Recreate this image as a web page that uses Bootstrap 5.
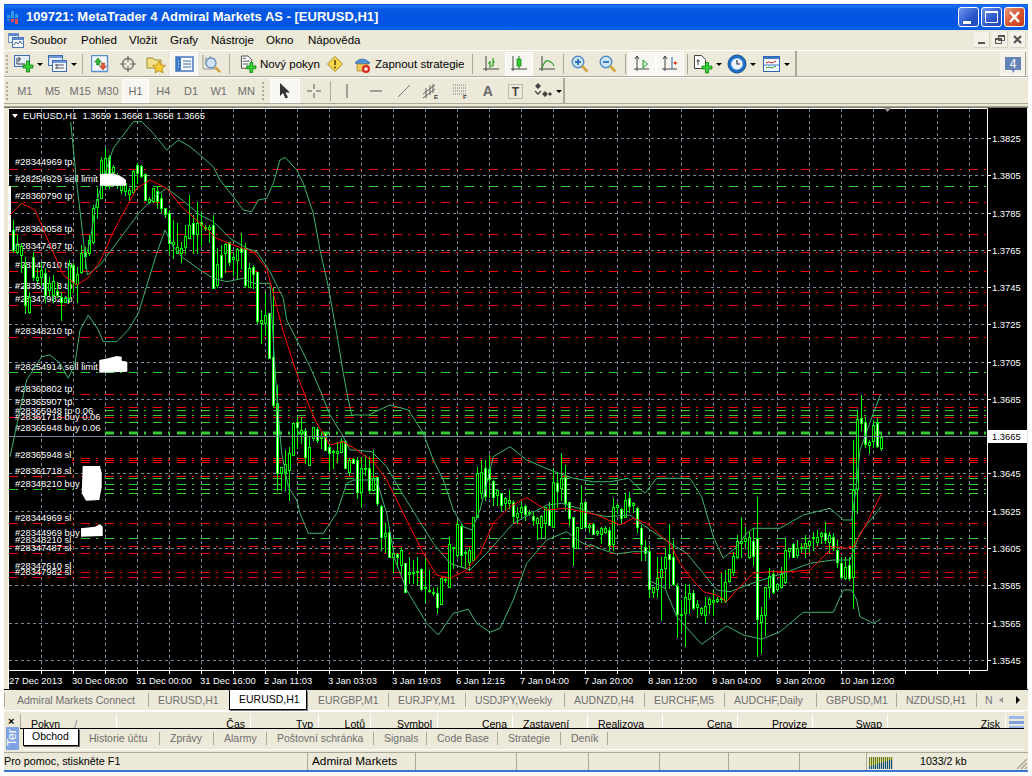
<!DOCTYPE html>
<html lang="cs">
<head>
<meta charset="UTF-8">
<title>109721: MetaTrader 4</title>
<link href="https://cdn.jsdelivr.net/npm/bootstrap@5.3.0/dist/css/bootstrap.min.css" rel="stylesheet">
<style>
body{background:#fff;padding:4px;font:11px/13px "Liberation Sans",Arial,sans-serif;color:#000}
.mt-window{width:1024px;height:768px;background:#ece9d8}
.title-row{height:26px;padding:0 3px 0 3px;color:#fff;font:bold 13px/26px "Liberation Sans",sans-serif;
 background:linear-gradient(#0a5be0 0,#1a72f0 8%,#0758e4 20%,#0054e3 80%,#0a62ec 95%,#0050d0 100%)}
.title-row svg{margin-right:3px}
.win-btn svg{margin:0}
.win-btn{width:21px;height:20px;margin-left:2px;border:1px solid #fff;border-radius:3px;background:linear-gradient(135deg,#6f96f0,#2a55c8 60%,#2248b8)}
.win-close{background:linear-gradient(135deg,#ec9a80,#d8512c 55%,#c03c18)}
.menu-row{height:20px;padding-left:4px}
.menu-row a{color:#000;text-decoration:none;font-size:11.5px}
.menu-items{display:grid;grid-template-columns:51px 48px 41px 41px 55px 42px 70px;margin-left:6px}
.child-btn{width:16px;height:16px;margin-right:2px;background:#f3f1e8;border-right:1px solid #d8d4c4;border-bottom:1px solid #d8d4c4}
.tool-row{height:27px;border-top:1px solid #fff;border-bottom:1px solid #aca899}
.tool-band{height:26px;border-right:2px solid #aca899}
.band-main{width:793px;display:grid;grid-template-columns:8px 33px 34px 7px 28px 28px 28px 28px 28px 6px 88px 29px 118px 10px 28px 28px 28px 5px 28px 28px 6px 28px 28px 6px 34px 34px 36px}
.band-tf{width:561px;display:grid;grid-template-columns:7px repeat(9,27.7px) 10px 30px 28px 4px 30px 28px 27px 28px 29px 27px 29px 35px;color:#6e6e6e}
.grip{width:2px;height:18px;margin-left:2px;align-self:center;border-left:2px dotted #aca899}
.tool-sep{width:1px;height:20px;justify-self:center;align-self:center;background:#aca899}
.tool-slot{height:24px;margin-top:1px}
.tool-on{background:#f7f6f0;outline:1px solid #fff;outline-offset:-1px}
.tool-drop::after{content:"";margin-left:3px;border-top:3px solid #000;border-left:3px solid transparent;border-right:3px solid transparent}
.tool-label{font-size:11.5px;margin-left:3px;white-space:nowrap}
.tf-on{height:24px;margin-top:1px;background:#f7f6f0;outline:1px solid #fff;outline-offset:-1px}
.tool-letter{font-size:14px;font-weight:bold;color:#666}
.chat-btn{width:26px;height:24px;margin:1px 2px 0 0;background:#f3f1e8;border-bottom:1px solid #fff;border-right:1px solid #aca899}
.chart-gap{height:4px;background:linear-gradient(#ece9d8 0,#ece9d8 40%,#8a887a 70%,#716f64 100%)}
.chart-holder{height:581px;padding-left:4px;background:#ece9d8}
.chart-holder svg{display:block;background:#000}
.chart-tabs{height:22px;border-top:1px solid #000;background:#ece9d8;border-bottom:1px solid #fff;color:#6e6e6e;font-size:10.500px;
 display:grid;grid-template-columns:4px 141px 80px 80px 80px 77px 99px 80px 80px 92px 80px 80px 48px;line-height:20px}
.chart-tabs>span{border-right:1px solid #aca899;margin:3px 0;line-height:14px;padding-left:9px;white-space:nowrap;overflow:hidden}
.chart-tabs>.tab-first{padding:0;border-left:1px solid #aca899;border-right:0}
.chart-tabs>.tab-on{background:#fff;color:#000;margin:0;height:20px;line-height:18px;border:1px solid #000;border-top:0;box-shadow:1px 1px 0 #777;padding-left:9px;width:78px}
.chart-tabs>.tab-plain{border:0}
.tab-arrows{border:0!important;padding:0!important;color:#000}
.term-box{height:41px}
.term-side{width:16px;padding-left:2px}
.term-close{font:bold 11px/10px "Liberation Sans",sans-serif;height:16px;padding:5px 0 0 2px}
.term-vert{width:13px;height:23px;background:#7fa2e4;color:#fff;writing-mode:vertical-rl;transform:rotate(180deg);text-align:right;font-size:12px;line-height:13px;overflow:hidden;padding-bottom:2px}
.term-main{width:1004px;border-top:1px solid #fff;padding-top:2px}
.head-row{height:14px;overflow:hidden;border-left:1px solid #aca899;line-height:21px;font-size:10.500px;
 display:grid;grid-template-columns:96px 134px 68px 52px 67px 75px 75px 75px 75px 75px 75px 118px 20px}
.head-row>span{border-right:1px solid #fff;padding:0 5px;text-align:right;white-space:nowrap;overflow:hidden}
.head-row>.head-left{text-align:left;padding-left:10px}
.head-sort{color:#888;margin-left:14px}
.head-icon{border:0!important;padding:2px 0 0 3px!important}
.term-tabs{height:22px;border-top:1px solid #000;color:#6e6e6e;border-bottom:1px solid #fff;font-size:10.500px;
 display:grid;grid-template-columns:3px 56px 81px 54px 53px 107px 53px 71px 63px 47px}
.term-tabs>span{border-right:1px solid #aca899;margin:3px 0;height:13px;padding-left:10px;white-space:nowrap;line-height:13px}
.term-tabs>.tab-first{padding:0;border:0}
.term-tabs>.term-on{background:#fff;color:#000;margin:0;height:17px;line-height:15px;border:1px solid #000;border-top:0;box-shadow:1px 1px 0 #666;padding-left:8px}
.status-row{height:18px;border-top:1px solid #aca899;font-size:11.800px;line-height:17px;
 display:grid;grid-template-columns:304px 108px 101px 72px 71px 69px 71px 67px 46px 1fr}
.status-row>span{border-right:1px solid #aca899;padding-left:4px;overflow:hidden;white-space:nowrap}
.status-row>.status-first{padding-left:0;font-size:10.800px}
.status-row>.status-last{border:0;padding-left:2px}
.status-row>.status-kb{border:0;padding-left:7px;font-size:10.600px}
.status-blue{height:2px;background:#3b74d2}
.chart-txt{font:9.400px "Liberation Sans",sans-serif;fill:#fff}
</style>
</head>
<body>
<div class="mt-window d-flex flex-column overflow-hidden">

  <div class="title-row d-flex align-items-center">
    <svg width="16" height="17" viewBox="0 0 16 17"><path d="M0 6h3v3H0zM4 2h3v7H4zM8 5h3v4H8z" fill="#2f9be8"/><path d="M4 10h3v3H4zM8 10h3v5H8z" fill="#d85050"/><path d="M0 10h3v2H0z" fill="#3a7fd0"/></svg>
    <span class="flex-grow-1">109721: MetaTrader 4 Admiral Markets AS - [EURUSD,H1]</span>
    <span class="win-btn d-flex align-items-end"><svg width="19" height="16" viewBox="0 0 19 16"><path d="M4 11h8v3H4z" fill="#fff"/></svg></span>
    <span class="win-btn"><svg class="d-block" width="19" height="18" viewBox="0 0 19 18"><path d="M3.500 3.500h12v11h-12z" fill="none" stroke="#fff"/><path d="M3 3h13v2H3z" fill="#fff"/></svg></span>
    <span class="win-btn win-close"><svg class="d-block" width="19" height="18" viewBox="0 0 19 18"><path d="M5 4l9 10M14 4L5 14" stroke="#fff" stroke-width="2.400"/></svg></span>
  </div>

  <div class="menu-row d-flex align-items-center">
    <svg width="16" height="15" viewBox="0 0 16 15"><rect x=".5" y=".5" width="10" height="9" fill="#eaf1fb" stroke="#6f8fc0"/><rect x="4.500" y="4.500" width="11" height="10" fill="#f7fafe" stroke="#4f78b8"/><path d="M1 1h9v2H1z" fill="#5b86c8"/><path d="M5 5h10v2H5z" fill="#5b86c8"/><path d="M6 12l2-3 2 2 2-3 2 3" fill="none" stroke="#3a5f98"/></svg>
    <div class="menu-items">
      <a href="#">Soubor</a><a href="#">Pohled</a><a href="#">Vložit</a><a href="#">Grafy</a><a href="#">Nástroje</a><a href="#">Okno</a><a href="#">Nápověda</a>
    </div>
    <span class="ms-auto child-btn"><svg class="d-block" width="16" height="16" viewBox="0 0 16 16"><path d="M4 10h7v2H4z" fill="#555"/></svg></span>
    <span class="child-btn"><svg class="d-block" width="16" height="16" viewBox="0 0 16 16"><path d="M6.500 3.500h6v5h-6zM3.500 6.500h6v5h-6z" fill="#f3f1e8" stroke="#555"/><path d="M6 3h7v2H6zM3 6h7v2H3z" fill="#555"/></svg></span>
    <span class="child-btn"><svg class="d-block" width="16" height="16" viewBox="0 0 16 16"><path d="M4 4l7 7M11 4l-7 7" stroke="#555" stroke-width="2.200"/></svg></span>
  </div>

  <div class="tool-row d-flex">
    <div class="tool-band band-main">
      <span class="grip"></span>
      <span class="tool-slot tool-drop d-flex align-items-center justify-content-center"><svg width="20" height="20" viewBox="0 0 20 20"><rect x=".5" y="1.500" width="15" height="11" fill="#e4eefa" stroke="#3f6fb0"/><path d="M3 4v6h8M5 3v5M5 5h2" fill="none" stroke="#333"/><path d="M10 9h3.500v-4h3v4H20v3h-3.500v4h-3v-4H10z" transform="translate(-1 2)" fill="#35d235" stroke="#0c7c0c" stroke-width=".8"/></svg></span>
      <span class="tool-slot tool-drop d-flex align-items-center justify-content-center"><svg width="20" height="20" viewBox="0 0 20 20"><rect x=".5" y="1.500" width="14" height="10" fill="#e4eefa" stroke="#3f6fb0"/><rect x="4.500" y="6.500" width="14" height="11" fill="#f4f8fe" stroke="#3f6fb0"/><path d="M1 2h13v2H1zM5 7h13v2H5z" fill="#6f9bd8"/><path d="M7 11h9M7 14h9M9 10v5" stroke="#556" fill="none"/></svg></span>
      <span class="tool-sep"></span>
      <span class="tool-slot d-flex align-items-center justify-content-center"><svg width="18" height="18" viewBox="0 0 18 18"><rect x=".5" y=".5" width="16" height="16" rx="1" fill="#f4f8fe" stroke="#5b8fd0" stroke-width="1.400"/><path d="M6 3l3.500 4H7.500v3h-3V7H2.500z" transform="translate(1 0)" fill="#2fb52f" stroke="#106a10" stroke-width=".5"/><path d="M12 15l-3.500-4h2V8h3v3h2z" fill="#e6562c" stroke="#8a2a10" stroke-width=".5"/></svg></span>
      <span class="tool-slot d-flex align-items-center justify-content-center"><svg width="18" height="18" viewBox="0 0 18 18"><circle cx="9" cy="9" r="5.500" fill="none" stroke="#777" stroke-width="1.400"/><path d="M9 1v6M9 11v6M1 9h6M11 9h6" stroke="#666" stroke-width="1.200"/></svg></span>
      <span class="tool-slot d-flex align-items-center justify-content-center"><svg width="20" height="20" viewBox="0 0 20 20"><path d="M1 4h6l2 2h6v8H1z" fill="#f2e08a" stroke="#a08a30"/><path d="M13 7l2 4 4.500.5-3.300 3 .9 4.500-4.100-2.300-4 2.300.9-4.500-3.300-3 4.500-.5z" fill="#f6c834" stroke="#a87f10" stroke-width=".7"/></svg></span>
      <span class="tool-slot tool-on d-flex align-items-center justify-content-center"><svg width="19" height="18" viewBox="0 0 19 18"><rect x="1" y="2" width="17" height="14" fill="#f8fbff" stroke="#2f66b0" stroke-width="1.300"/><path d="M1 2h5v14H1z" fill="#3d78c8"/><path d="M8 6h8M8 9h8M8 12h8" stroke="#3a6aa8"/><path d="M3 6h1M3 9h1M3 12h1" stroke="#fff"/></svg></span>
      <span class="tool-slot d-flex align-items-center justify-content-center"><svg width="20" height="20" viewBox="0 0 20 20"><path d="M1 1v14h14" fill="none" stroke="#999"/><path d="M4 3v8M8 2v7M12 4v5" stroke="#888"/><circle cx="9" cy="9" r="5" fill="#cfe2f6" stroke="#6a8fb8" stroke-width="1.300"/><path d="M13 13l5 5" stroke="#d0a030" stroke-width="2.400"/></svg></span>
      <span class="tool-sep"></span>
      <span class="tool-slot d-flex align-items-center ps-2"><svg width="18" height="20" viewBox="0 0 18 20"><path d="M1.500 1.500h7l4 4v9h-11z" fill="#fff" stroke="#444"/><path d="M3 7h7M3 10h6M3 4h3" stroke="#444"/><path d="M8 11h3.500V7.500h3V11H18v3h-3.500v4h-3v-4H8z" transform="translate(-1 1)" fill="#35d235" stroke="#0c7c0c" stroke-width=".8"/></svg><span class="tool-label">Nový pokyn</span></span>
      <span class="tool-slot d-flex align-items-center justify-content-center"><svg width="16" height="16" viewBox="0 0 16 16"><path d="M8 .5L15.500 8 8 15.500.5 8z" fill="#f8d848" stroke="#a88820"/><path d="M8 4v5M8 10.500v2" stroke="#70500a" stroke-width="1.800"/></svg></span>
      <span class="tool-slot d-flex align-items-center ps-1"><svg width="19" height="20" viewBox="0 0 19 20"><path d="M2 9q7-8 15 0-7 3-15 0z" fill="#4f95d8" stroke="#20609f" stroke-width=".7"/><path d="M4 10h11v7H4z" fill="#eec85c" stroke="#9f8328" stroke-width=".7"/><circle cx="13" cy="15" r="4" fill="#d82a1c"/><circle cx="13" cy="15" r="1.800" fill="#fff"/></svg><span class="tool-label">Zapnout strategie</span></span>
      <span class="tool-sep"></span>
      <span class="tool-slot d-flex align-items-center justify-content-center"><svg width="18" height="18" viewBox="0 0 18 18"><path d="M4 1v15M1 14h16" stroke="#444" fill="none"/><path d="M8 6v7M11 3v8" stroke="#1e9a1e" stroke-width="1.200"/><path d="M6 8h2M11 7h2M9 11h2" stroke="#1e9a1e"/></svg></span>
      <span class="tool-slot tool-on d-flex align-items-center justify-content-center"><svg width="18" height="18" viewBox="0 0 18 18"><path d="M3 1v15M1 14h16" stroke="#444" fill="none"/><path d="M9 1v13" stroke="#0c7c0c"/><rect x="7" y="4" width="4" height="7" fill="#2ed02e" stroke="#0c7c0c" stroke-width=".7"/></svg></span>
      <span class="tool-slot d-flex align-items-center justify-content-center"><svg width="18" height="18" viewBox="0 0 18 18"><path d="M4 1v15M1 14h16" stroke="#444" fill="none"/><path d="M4 13q3-9 7-7t5 5" fill="none" stroke="#2c9a2c" stroke-width="1.200"/></svg></span>
      <span class="tool-sep"></span>
      <span class="tool-slot d-flex align-items-center justify-content-center"><svg width="18" height="18" viewBox="0 0 18 18"><circle cx="7" cy="7" r="5.800" fill="#cfe6fa" stroke="#4f8bc4" stroke-width="1.400"/><path d="M4 7h6M7 4v6" stroke="#2a70b8" stroke-width="1.800"/><path d="M11 11l5.500 5.500" stroke="#d2a63a" stroke-width="2.600"/></svg></span>
      <span class="tool-slot d-flex align-items-center justify-content-center"><svg width="18" height="18" viewBox="0 0 18 18"><circle cx="7" cy="7" r="5.800" fill="#cfe6fa" stroke="#4f8bc4" stroke-width="1.400"/><path d="M4 7h6" stroke="#2a70b8" stroke-width="1.800"/><path d="M11 11l5.500 5.500" stroke="#d2a63a" stroke-width="2.600"/></svg></span>
      <span class="tool-sep"></span>
      <span class="tool-slot tool-on d-flex align-items-center justify-content-center"><svg width="18" height="18" viewBox="0 0 18 18"><path d="M4 1v15M1 14h15" stroke="#444" fill="none"/><path d="M2 4l2-3 2 3" fill="none" stroke="#444"/><path d="M10 5l4.500 4L10 13z" fill="#d8f4d8" stroke="#1e9a1e"/></svg></span>
      <span class="tool-slot tool-on d-flex align-items-center justify-content-center"><svg width="18" height="18" viewBox="0 0 18 18"><path d="M4 1v15M1 14h15" stroke="#444" fill="none"/><path d="M2 4l2-3 2 3" fill="none" stroke="#444"/><path d="M11 2v12" stroke="#2a6ab0"/><path d="M12 8l3-2v1.500h1.500v1H15V10z" fill="#d8401c"/></svg></span>
      <span class="tool-sep"></span>
      <span class="tool-slot tool-drop d-flex align-items-center justify-content-center"><svg width="20" height="20" viewBox="0 0 20 20"><path d="M1.500 1.500h7l4 4v9h-11z" fill="#fff" stroke="#444"/><path d="M5 5v6M3.500 7H7" stroke="#444"/><path d="M8 11h3.500V7.500h3V11H18v3h-3.500v4h-3v-4H8z" transform="translate(1 1)" fill="#35d235" stroke="#0c7c0c" stroke-width=".8"/></svg></span>
      <span class="tool-slot tool-drop d-flex align-items-center justify-content-center"><svg width="20" height="20" viewBox="0 0 20 20"><circle cx="10" cy="10" r="9" fill="#1f6fc4" stroke="#104f90"/><circle cx="10" cy="10" r="5.800" fill="#eaf2fa"/><path d="M10 6v4h3" fill="none" stroke="#333" stroke-width="1.200"/></svg></span>
      <span class="tool-slot tool-drop d-flex align-items-center justify-content-center"><svg width="18" height="16" viewBox="0 0 18 16"><rect x=".5" y=".5" width="16" height="15" fill="#f8fbff" stroke="#2f66b0"/><path d="M1 1h15v2H1z" fill="#3d78c8"/><path d="M3 7l3-1 3 1 4-2" fill="none" stroke="#c03020"/><path d="M3 12l3-1 3 1 4-2" fill="none" stroke="#2c9a2c"/><path d="M1 9h15" stroke="#3d78c8"/></svg></span>
    </div>
    <span class="chat-btn ms-auto"><svg class="d-block" width="26" height="24" viewBox="0 0 26 24"><path d="M5 5h16v13h-6l-2 3-1-3H5z" fill="#6483b4"/><text x="13" y="16" text-anchor="middle" fill="#fff" font-family="Liberation Sans" font-size="12">4</text></svg></span>
  </div>

  <div class="tool-row">
    <div class="tool-band band-tf">
      <span class="grip"></span>
      <span class="d-flex align-items-center justify-content-center">M1</span>
      <span class="d-flex align-items-center justify-content-center">M5</span>
      <span class="d-flex align-items-center justify-content-center">M15</span>
      <span class="d-flex align-items-center justify-content-center">M30</span>
      <span class="tf-on d-flex align-items-center justify-content-center">H1</span>
      <span class="d-flex align-items-center justify-content-center">H4</span>
      <span class="d-flex align-items-center justify-content-center">D1</span>
      <span class="d-flex align-items-center justify-content-center">W1</span>
      <span class="d-flex align-items-center justify-content-center">MN</span>
      <span class="grip"></span>
      <span class="tool-slot tool-on d-flex align-items-center justify-content-center"><svg width="14" height="16" viewBox="0 0 14 16"><path d="M2 0v13l3-3 2.500 5.500 2.500-1L7.500 9.500H12z" fill="#333"/></svg></span>
      <span class="tool-slot d-flex align-items-center justify-content-center"><svg width="16" height="16" viewBox="0 0 16 16"><path d="M8 1v5M8 10v5M1 8h5M10 8h5" stroke="#555"/></svg></span>
      <span class="tool-sep"></span>
      <span class="tool-slot d-flex align-items-center justify-content-center"><svg width="6" height="14" viewBox="0 0 6 14"><path d="M3 0v14" stroke="#555"/></svg></span>
      <span class="tool-slot d-flex align-items-center justify-content-center"><svg width="14" height="6" viewBox="0 0 14 6"><path d="M1 3h12" stroke="#555"/></svg></span>
      <span class="tool-slot d-flex align-items-center justify-content-center"><svg width="14" height="14" viewBox="0 0 14 14"><path d="M1 13L13 1" stroke="#777"/></svg></span>
      <span class="tool-slot d-flex align-items-center justify-content-center"><svg width="18" height="18" viewBox="0 0 18 18"><path d="M1 12L13 3M1 16L13 7M4 6v10M8 3v10M11 2v9" stroke="#666" fill="none"/><text x="12" y="17" fill="#333" font-family="Liberation Sans" font-size="6" font-weight="bold">E</text></svg></span>
      <span class="tool-slot d-flex align-items-center justify-content-center"><svg width="18" height="18" viewBox="0 0 18 18"><path d="M2 3h13M2 6h13M2 9h13M2 12h13" stroke="#777" stroke-dasharray="1 1"/><text x="12" y="17" fill="#333" font-family="Liberation Sans" font-size="6" font-weight="bold">F</text></svg></span>
      <span class="tool-slot tool-letter d-flex align-items-center justify-content-center">A</span>
      <span class="tool-slot d-flex align-items-center justify-content-center"><svg width="15" height="15" viewBox="0 0 15 15"><path d="M.5.5h14v14H.5z" fill="none" stroke="#888" stroke-dasharray="1 1"/><text x="7.500" y="12" text-anchor="middle" fill="#444" font-family="Liberation Sans" font-size="12" font-weight="bold">T</text></svg></span>
      <span class="tool-slot tool-drop d-flex align-items-center justify-content-center"><svg width="20" height="16" viewBox="0 0 20 16"><path d="M5 0l3 3-3 3-3-3zM12 8l3 3-3 3-3-3zM17 9l2 2-2 2-2-2z" fill="#444"/><path d="M2 8l3 3 3-3" fill="none" stroke="#444" stroke-width="1.300"/></svg></span>
    </div>
  </div>

  <div class="chart-gap"></div>
  <div class="chart-holder"><svg id="chart" width="1019" height="581" viewBox="8 108 1019 581"></svg></div>

  <div class="chart-tabs">
    <span class="tab-first"></span>
    <span>Admiral Markets Connect</span>
    <span class="tab-plain">EURUSD,H1</span>
    <span class="tab-on">EURUSD,H1</span>
    <span>EURGBP,M1</span>
    <span>EURJPY,M1</span>
    <span>USDJPY,Weekly</span>
    <span>AUDNZD,H4</span>
    <span>EURCHF,M5</span>
    <span>AUDCHF,Daily</span>
    <span>GBPUSD,M1</span>
    <span>NZDUSD,H1</span>
    <span class="tab-arrows d-flex align-items-center"><span class="ms-2 text-secondary">N</span><svg class="ms-1" width="26" height="10" viewBox="0 0 26 10"><path d="M6 2v6L2 5z" fill="#999"/><path d="M19 1v8l4-4z" fill="#000"/></svg></span>
  </div>

  <div class="term-box d-flex">
    <div class="term-side">
      <div class="term-close">×</div>
      <div class="term-vert">Ter</div>
    </div>
    <div class="term-main">
      <div class="head-row">
        <span class="head-left">Pokyn<span class="head-sort">/</span></span>
        <span>Čas</span><span>Typ</span><span>Lotů</span><span>Symbol</span><span>Cena</span>
        <span class="head-left">Zastavení</span><span class="head-left">Realizova</span>
        <span>Cena</span><span>Provize</span><span>Swap</span><span>Zisk</span>
        <span class="head-icon"><svg class="d-block" width="16" height="12" viewBox="0 0 16 12"><path d="M0 0h16v3H0z" fill="#9db8ea"/><path d="M0 5h16v3H0z" fill="#7f9fe0"/><path d="M0 10h16v2H0z" fill="#9db8ea"/></svg></span>
      </div>
      <div class="term-tabs">
        <span class="tab-first"></span>
        <span class="term-on">Obchod</span>
        <span>Historie účtu</span><span>Zprávy</span><span>Alarmy</span><span>Poštovní schránka</span><span>Signals</span><span>Code Base</span><span>Strategie</span><span>Deník</span>
      </div>
    </div>
  </div>

  <div class="status-row">
    <span class="status-first">Pro pomoc, stiskněte F1</span>
    <span>Admiral Markets</span>
    <span></span><span></span><span></span><span></span><span></span><span></span>
    <span class="status-last"><svg id="netbars" class="d-block mt-1" width="24" height="12" viewBox="0 0 24 12"></svg></span>
    <span class="status-kb d-flex justify-content-between"><span>1033/2 kb</span><svg class="align-self-end" width="12" height="12" viewBox="0 0 12 12"><path d="M11 1L1 11M11 5l-6 6M11 9l-2 2" stroke="#aca899" stroke-width="1.500"/></svg></span>
  </div>
  <div class="status-blue"></div>
</div>

<script>
// zoom coordinates -> screen coordinates
function pts(x0, y0, list) {
    let out = [];
    for (let i = 0; i < list.length; i += 2) out.push((x0 + list[i] / 3).toFixed(1) + "," + (y0 + list[i + 1] / 3).toFixed(1));
    return out.join(" ");
}

// candles: [v, high, top, bottom, low, down?]  in crop coordinates
const seg1 = [[39,345,375,435,440,1],[51,390,420,440,445],[63,415,422,450,500],[75,455,480,600,625,1],[87,560,575,620,625],[99,440,455,515,525,1],[111,490,515,525,530],[123,470,495,515,540],[135,490,505,570,590,1],[147,515,535,555,570],[159,510,527,570,590],[171,530,558,570,575,1],[183,560,575,590,645,1],[195,575,578,590,590],[207,465,480,580,590],[219,475,480,530,560,1],[231,485,508,537,590],[243,420,445,500,505],[255,425,440,452,490,1],[267,390,405,445,450],[279,300,310,412,415],[291,250,283,305,340],[303,155,165,280,280],[315,130,160,240,250],[327,150,155,205,250,1],[339,180,185,200,240],[351,205,212,240,250],[363,235,240,255,265],[375,230,235,258,270],[387,250,255,268,285],[399,195,198,262,265],[411,175,180,205,235,1],[423,180,182,212,215,1],[435,205,207,285,285,1],[447,275,283,292,295],[459,250,250,288,290],[471,245,258,288,310,1],[483,265,278,308,320,1],[495,308,310,328,335,1],[507,315,323,415,445,1],[519,345,412,417,460],[531,355,425,445,445],[543,410,430,445,470],[555,360,393,425,445],[567,270,360,400,400],[579,330,355,387,445,1],[591,290,353,387,445],[603,320,352,360,420,1],[615,360,365,370,375],[627,360,365,372,410],[639,330,360,548,550,1],[651,430,478,540,545],[663,420,450,515,520,1],[675,415,418,445,500],[687,410,412,470,480,1],[699,440,457,462,510],[711,430,432,465,520],[723,385,430,440,490,1],[735,415,430,540,545,1]];
const seg2 = [[147,430,445,500,500],[159,435,440,463,505,1],[171,455,457,602,610,1],[183,570,600,610,670],[195,515,585,610,645],[207,580,580,715,715,1],[219,505,710,855,860,1],[231,795,850,1060,1110,1],[243,1040,1040,1060,1110],[255,990,1033,1058,1110],[267,980,1000,1050,1140],[279,905,910,1005,1005],[291,890,905,922,985,1]];
const seg3 = [[3,50,90,100,130],[15,85,93,172,190,1],[27,110,140,195,195],[39,80,80,115,120],[51,80,88,120,125,1],[63,95,108,115,145],[75,95,100,150,150,1],[87,130,142,160,210,1],[99,150,152,154,205],[111,125,153,160,185],[123,115,122,155,155],[135,120,122,205,205,1],[147,175,180,215,225],[159,175,178,188,190,1],[171,170,180,275,295,1],[183,170,205,275,320],[195,165,205,207,225],[207,170,205,270,275,1],[219,150,235,270,270],[231,230,232,310,315,1],[243,315,317,412,450,1],[255,370,400,407,455],[267,380,395,470,470,1],[279,440,460,472,515],[291,460,462,470,500,1],[303,440,450,495,520],[315,490,490,575,575,1],[327,470,517,523,550],[339,480,515,518,550],[351,470,512,515,555],[363,505,508,568,570,1],[375,470,560,565,605],[387,510,570,572,575],[399,565,575,578,585],[411,560,580,620,638,1],[423,535,535,613,613],[435,535,538,541,545],[447,410,433,560,560],[459,440,440,443,505],[471,360,373,465,470],[483,372,378,465,498,1],[495,450,455,458,505],[507,440,450,485,510],[519,350,352,480,480],[531,200,220,350,350],[543,180,217,280,295],[555,180,205,288,300,1],[567,165,207,238,290,1],[579,240,243,290,315,1],[591,270,270,285,315],[603,278,278,315,330,1],[615,290,295,310,330],[627,270,300,310,325],[639,300,307,347,365,1],[651,320,340,350,370],[663,300,322,337,350],[675,315,317,342,360,1],[687,330,335,340,345],[699,340,347,360,375,1],[711,352,355,368,417],[723,345,347,380,410],[735,320,322,370,410],[747,305,328,375,375,1],[759,205,245,380,380],[771,215,250,272,320,1],[783,160,235,265,300],[795,195,232,310,330,1],[807,305,307,355,375,1],[819,350,350,440,495,1],[831,380,380,445,445],[843,255,310,385,385],[855,305,307,382,385,1],[867,370,375,380,395],[879,370,373,402,402,1],[891,390,392,400,405]];
const seg4 = [[34,380,385,402,430],[46,378,385,395,400],[58,380,390,435,450,1],[70,295,322,432,450],[82,310,316,322,340],[94,325,327,355,370,1],[106,280,300,350,352],[118,275,295,318,335,1],[130,305,310,316,335],[142,322,323,380,395,1],[154,375,385,433,480,1],[166,420,440,458,480,1],[178,435,452,568,590,1],[190,560,562,575,590],[202,470,535,568,590],[214,470,508,530,660],[226,445,470,503,565],[238,372,463,478,565,1],[250,420,472,553,555,1],[262,550,558,643,710,1],[274,600,642,646,697],[286,552,592,638,738],[298,552,580,598,640],[310,570,580,625,628,1],[322,600,613,620,650],[334,620,625,640,645],[346,590,618,645,665],[358,590,598,613,640],[370,570,600,607,645],[382,590,597,603,605],[394,520,593,598,605],[406,510,547,603,605],[418,510,508,542,545],[430,455,468,515,525],[442,405,423,472,475],[454,350,423,430,470],[466,380,415,423,440],[478,395,412,470,475],[490,385,423,467,495,1],[502,290,415,658,768,1],[514,620,645,665,760],[526,560,562,645,705],[538,505,528,560,590],[550,510,522,575,580,1],[562,550,552,568,570],[574,500,522,562,565],[586,415,450,545,550],[598,445,445,452,470],[610,430,433,470,470,1],[622,420,445,465,470],[634,430,440,442,455],[646,405,430,445,470],[658,420,423,435,455],[670,395,410,413,450],[682,390,412,425,435],[694,395,400,407,430],[706,365,400,420,430,1],[718,395,405,425,455],[730,400,412,445,450,1],[742,420,450,485,500,1],[754,470,490,530,535,1],[766,470,502,535,538],[778,470,495,535,540,1],[790,120,270,530,625],[802,30,58,268,340],[814,-15,55,70,90,1],[826,50,65,133,140,1],[838,120,127,135,160],[850,60,75,122,140],[862,55,70,138,140,1],[874,95,110,145,150]];

function candles(x0, y0, list) {
    let s = "";
    list.forEach(c => {
        let x = Math.round(x0 + c[0] / 3), y = v => Math.round(y0 + v / 3);
        s += `<line x1="${x + .5}" x2="${x + .5}" y1="${y(c[1])}" y2="${y(c[4]) + 1}" stroke="#0f0"/>`;
        s += `<rect x="${x - .5}" y="${y(c[2]) + .5}" width="2" height="${Math.max(y(c[3]) - y(c[2]), 1)}" fill="${c[5] ? "#fff" : "#000"}" stroke="#0f0"/>`;
    });
    return s;
}

function band(colour, parts) {
    let p = parts.map(a => pts(a[0], a[1], a[2])).join(" ");
    return `<polyline points="${p}" fill="none" stroke="${colour}" stroke-width="1"/>`;
}

let grid = "", g = "";
for (let x = 41; x < 987; x += 32) grid += `<path d="M${x + .5} 109V670" stroke="#778899" stroke-dasharray="3 3"/>`;
for (let i = 0; i < 15; i++) {
    let y = Math.round(138 + 37.27 * i);
    grid += `<path d="M9 ${y + .5}H987" stroke="#778899" stroke-dasharray="3 3"/>`;
}

// order lines: [y, colour, start x, width]
const R = "#f00", G = "#32cd32";
const orders = [[169,R,9],[186,G,9],[202,R,9],[234,R,9],[252,R,9],[271,R,9],[292,R,9],[305,R,9],[337,R,9],[372,G,9],[394,R,72],[407,R,105],[410,G,105],[415,G,105],[417,R,9],[422,G,105],[432,G,105,2],[433,G,105,2],[458,R,72],[460,R,72],[462,R,72],[476,R,9],[478,G,105],[484,G,105],[489,G,9],[493,G,105],[523,R,9],[538,G,80],[546,R,9],[553,R,9],[572,R,9],[577,R,9]];
orders.forEach(o => {
    g += `<path d="M${o[2]} ${o[0] + .5}H987" stroke="${o[1]}" stroke-width="${o[3] || 1}" stroke-dasharray="9 6 2 7" stroke-dashoffset="${(o[2] - 9) % 24}"/>`;
});

// order labels
const labels = [["#28344969 tp",165],["#28254929 sell limit",182],["#28360790 tp",199],["#28360058 tp",232],["#28347487 tp",249],["#28347610 tp",268],["#28351718 tp",289],["#28347982 tp",302],["#28348210 tp",334],["#28254914 sell limit",370],["#28360802 tp",392],["#28365907 tp",405],["#28365948 tp 0.06",414],["#28361718 buy 0.06",420],["#28365948 buy 0.06",431],["#28365948 sl",458],["#28361718 sl",474],["#28348210 buy",487],["#28344969 sl",521],["#28344969 buy",536],["#28348210 sl",543],["#28347487 sl",551],["#28347610 sl",569],["#28347982 sl",575]];
let t = labels.map(l => `<text class="chart-txt" x="15" y="${l[1]}">${l[0]}</text>`).join("");

let c = `<rect x="9" y="186" width="2" height="46" fill="#fff"/>`;
c += candles(0, 105, seg1) + candles(200, 120, seg2) + candles(300, 400, seg3) + candles(590, 400, seg4);

let lines = "";
lines += band("#3cb371", [[0,105,[262,440,272,400,285,310,310,220,340,130,370,90,400,50,425,50,460,85,500,135,535,105,570,125,600,150]],
    [200,120,[40,140,60,180,100,230,130,270,155,275,175,240,200,235,220,190,240,120,255,112,290,150,310,190,340,280,360,390,385,500,410,640,430,760]],
    [300,400,[145,0,155,45,205,45,270,15,325,30,370,100,400,180,430,240,460,330,490,380,515,390,540,330,580,170,630,140,680,180,750,210,820,235,870,243]],
    [590,400,[0,245,60,245,115,235,165,280,200,235,270,235,300,235,335,290,370,410,400,475,440,440,470,400,490,385,570,385,640,345,720,325,760,360,785,360,800,250,810,150,850,40,872,-18]]]);
lines += band("#3cb371", [[0,105,[212,50,220,130,232,250,245,360,262,510,300,480,330,440,420,320,470,270,500,250,540,280,600,330,640,350,690,400,740,430,770,440,810,500,850,580]],
    [200,120,[260,600,290,660,330,740,360,810,390,885,430,950,450,990]],
    [300,400,[165,150,215,155,260,200,300,270,350,350,400,430,450,490,510,510,560,460,640,370,740,315,785,310,870,335]],
    [590,400,[0,340,50,350,120,345,160,375,210,410,290,460,340,520,380,570,420,575,500,545,580,520,660,490,730,480,780,480,810,400,872,322]]]);
lines += band("#3cb371", [[0,330,[30,380,60,240,80,150,125,80,150,75,180,100,205,145,225,100,240,0,265,-45,295,0,310,35,350,35,385,0,415,-50,470,-230,495,-300,520,-250,545,-220,600,-180,640,-155,680,-145,730,-155,760,-140]],
    [200,120,[170,490,210,490,222,700,232,850,245,1000,265,1100,290,1140]],
    [300,400,[0,340,25,400,70,400,110,340,140,250,160,240,230,240,260,340,285,480,320,570,380,670,415,705,460,640,505,628,530,670,570,697,600,685,640,600,680,490,740,420,800,395,840,425,870,440]],
    [590,400,[0,433,40,450,80,462,130,455,175,455,175,540,225,565,260,650,335,733,410,678,460,705,515,718,570,695,640,637,730,637,760,570,785,570,800,600,810,650,850,670,872,657]]]);
lines += band("#f00", [[0,105,[30,330,65,295,105,315,150,420,190,510,230,540,262,520,300,470,340,380,410,250,450,225,500,250,545,305,600,355,650,400,700,420,760,440,800,490,850,680]],
    [200,120,[290,760]],
    [300,400,[20,0,50,70,90,135,130,125,170,150,220,185,260,240,290,300,330,380,370,460,410,525,450,535,500,510,540,460,580,370,630,320,680,293,740,330,800,325,870,340]],
    [590,400,[0,340,20,345,90,375,130,355,170,370,210,405,240,430,270,490,300,530,340,575,380,585,410,605,440,570,490,520,540,515,600,515,660,510,700,470,730,440,770,445,790,440,830,370,875,280]]]);

// white marks over the labels
const blobs = [[0,105,[300,207,340,205,365,215,378,225,378,242,300,242]],[0,330,[298,90,325,85,350,78,365,80,365,92,382,95,382,125,298,128]],[0,330,[248,408,300,408,305,430,305,470,298,510,258,512,245,490]],[0,330,[243,595,285,590,300,582,308,590,308,618,243,620]]];
let b = blobs.map(a => `<polygon points="${pts(a[0], a[1], a[2])}" fill="#fff"/>`).join("");

// axes
let ax = `<path d="M9 436.500H987" stroke="#778899"/><path d="M8 108.500H987.500V670.500H9" fill="none" stroke="#fff"/><path d="M8.500 108V689" stroke="#fff"/><path d="M884 108h7l-3.500 4z" fill="#999"/>`;
const prices = ["1.3825","1.3805","1.3785","1.3765","1.3745","1.3725","1.3705","1.3685","1.3665","1.3645","1.3625","1.3605","1.3585","1.3565","1.3545"];
prices.forEach((p, i) => {
    let y = Math.round(138 + 37.27 * i);
    ax += `<path d="M987 ${y + .5}h4" stroke="#fff"/>`;
    if (i != 8) ax += `<text class="chart-txt" x="992" y="${y + 4}">${p}</text>`;
});
ax += `<rect x="988" y="430" width="39" height="13" fill="#fff"/><text class="chart-txt" x="992" y="440" style="fill:#000">1.3665</text>`;
const times = ["27 Dec 2013","30 Dec 08:00","31 Dec 00:00","31 Dec 16:00","2 Jan 11:03","3 Jan 03:03","3 Jan 19:03","6 Jan 12:15","7 Jan 04:00","7 Jan 20:00","8 Jan 12:00","9 Jan 04:00","9 Jan 20:00","10 Jan 12:00"];
for (let x = 41; x < 987; x += 32) ax += `<path d="M${x + .5} 670v4" stroke="#fff"/>`;
times.forEach((s, i) => {
    ax += `<text class="chart-txt" x="${i ? 8 + 64 * i : 9}" y="684">${s}</text>`;
});
ax += `<path d="M12 114h6l-3 4z" fill="#fff"/><text class="chart-txt" x="23" y="119">EURUSD,H1&#160; 1.3659 1.3668 1.3658 1.3665</text>`;

document.getElementById("chart").innerHTML = grid + g + t + c + lines + b + ax;

// status bar traffic indicator
let nb = "";
for (let i = 0; i < 12; i++) {
    let x = i * 2;
    let split = 9 - Math.floor(i * 0.6);
    nb += `<rect x="${x}" y="0" width="1.200" height="${split}" fill="#6b7d00"/><rect x="${x}" y="${split}" width="1.200" height="${12 - split}" fill="#0d4f6e"/>`;
}
document.getElementById("netbars").innerHTML = nb;
</script>
<script src="https://cdn.jsdelivr.net/npm/bootstrap@5.3.0/dist/js/bootstrap.bundle.min.js"></script>
</body>
</html>
